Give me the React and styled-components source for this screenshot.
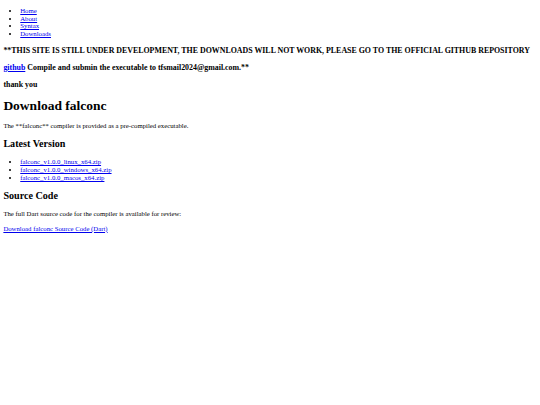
import React from 'react';
import styled, { createGlobalStyle } from 'styled-components';

// Plain, unstyled HTML document as it looks at 1280px wide, brought down
// to 540px: every browser default below is multiplied by 0.421875.
const GlobalStyle = createGlobalStyle`
  body {
    margin: 0;
    background: #fff;
    color: #000;
    font-family: "Liberation Serif", "Times New Roman", serif;
    font-size: 6.75px;
    line-height: 1.15;
  }

  a {
    color: #0000ee;
  }
`;

// padding stands in for the body margin; the nav's top margin is trimmed
// so the two add up to the collapsed 16px of the original
const Page = styled.div`
  padding: 3.375px;
`;

const NavList = styled.ul`
  margin: 3.375px 0 6.75px;
  padding-left: 16.875px;
  list-style: disc;
`;

const Notice = styled.h3`
  margin: 7.9px 0;
  font-size: 7.9px;
  font-weight: bold;
`;

const PageTitle = styled.h1`
  margin: 9.05px 0;
  font-size: 13.5px;
  font-weight: bold;
`;

const SectionTitle = styled.h2`
  margin: 8.4px 0;
  font-size: 10.125px;
  font-weight: bold;
`;

const Paragraph = styled.p`
  margin: 6.75px 0;
`;

const DownloadList = styled.ul`
  margin: 6.75px 0;
  padding-left: 16.875px;
  list-style: disc;
`;

const navLinks = [
  { label: 'Home', href: '#home' },
  { label: 'About', href: '#about' },
  { label: 'Syntax', href: '#syntax' },
  { label: 'Downloads', href: '#downloads' },
];

const downloads = [
  'falconc_v1.0.0_linux_x64.zip',
  'falconc_v1.0.0_windows_x64.zip',
  'falconc_v1.0.0_macos_x64.zip',
];

const App = () => (
  <Page>
    <GlobalStyle />
    <NavList>
      {navLinks.map((link) => (
        <li key={link.label}>
          <a href={link.href}>{link.label}</a>
        </li>
      ))}
    </NavList>

    <Notice>
      **THIS SITE IS STILL UNDER DEVELOPMENT, THE DOWNLOADS WILL NOT WORK,
      PLEASE GO TO THE OFFICIAL GITHUB REPOSITORY
    </Notice>
    <Notice>
      <a href="#github">github</a> Compile and submin the executable to
      tfsmail2024@gmail.com.**
    </Notice>
    <Notice>thank you</Notice>

    <PageTitle>Download falconc</PageTitle>
    <Paragraph>
      The **falconc** compiler is provided as a pre-compiled executable.
    </Paragraph>

    <SectionTitle>Latest Version</SectionTitle>
    <DownloadList>
      {downloads.map((file) => (
        <li key={file}>
          <a href={`#${file}`}>{file}</a>
        </li>
      ))}
    </DownloadList>

    <SectionTitle>Source Code</SectionTitle>
    <Paragraph>
      The full Dart source code for the compiler is available for review:
    </Paragraph>
    <Paragraph>
      <a href="#source">Download falconc Source Code (Dart)</a>
    </Paragraph>
  </Page>
);

export default App;
